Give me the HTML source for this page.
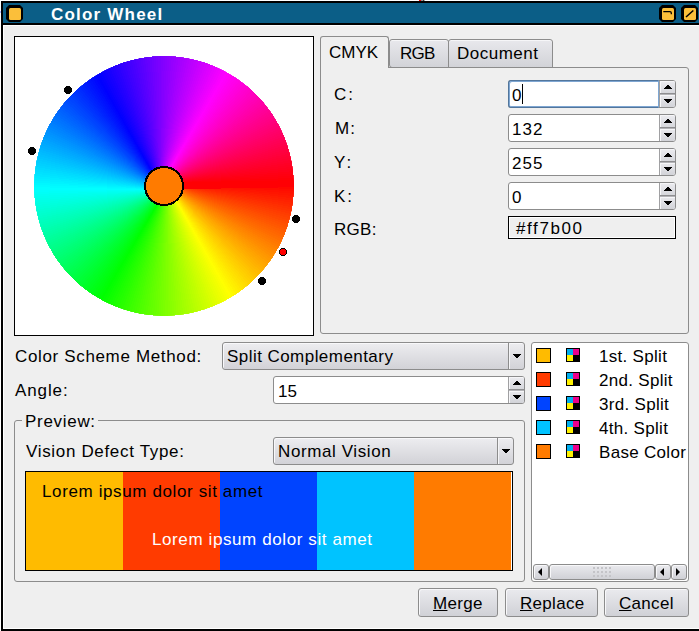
<!DOCTYPE html>
<html><head><meta charset="utf-8">
<style>
*{box-sizing:border-box}
html,body{margin:0;padding:0;width:699px;height:631px;overflow:hidden;background:#fff;position:relative}
.a{position:absolute}
.t{position:absolute;font-family:"Liberation Sans",sans-serif;font-size:17px;line-height:20px;white-space:nowrap;color:#000}
.b{font-weight:bold}
.btn{position:absolute;border:1px solid #8c8c8c;border-radius:3px;background:linear-gradient(#eaeaee,#d0d1d6);box-shadow:inset 1px 1px 0 #f8f8fa}
.field{position:absolute;background:#fff;border:1px solid #8c8c8c;border-radius:3px}
</style></head><body>
<!-- window -->
<div class="a" style="left:1px;top:1px;width:760px;height:630px;background:#efefef;border:2px solid #000;border-right:none"></div>
<div class="a" style="left:3px;top:3px;width:760px;height:20px;background:#0b5e87"></div>
<div class="a" style="left:3px;top:23px;width:760px;height:2px;background:#000"></div>
<div class="a" style="left:3px;top:25px;width:760px;height:1px;background:#fff"></div>
<div class="a" style="left:3px;top:25px;width:1px;height:604px;background:#fff"></div>
<div class="a" style="left:3px;top:628px;width:760px;height:1px;background:#fff"></div>

<!-- title icons -->
<svg class="a" style="left:6px;top:5px" width="17" height="17" viewBox="0 0 17 17">
<path d="M3 0H14L17 3V14L14 17H3L0 14V3Z" fill="#000"/>
<rect x="3" y="3" width="12" height="12" rx="1.5" fill="#fbbf3a"/>
</svg>
<svg class="a" style="left:659px;top:5px" width="17" height="17" viewBox="0 0 17 17">
<path d="M3 0H14L17 3V14L14 17H3L0 14V3Z" fill="#000"/>
<rect x="3" y="3" width="12" height="12" rx="1.5" fill="#fbbf3a"/>
<path d="M4.3 6.6H11Q12.3 6.6 12.3 8V9.2" stroke="#000" stroke-width="1.3" fill="none"/>
</svg>
<svg class="a" style="left:681px;top:5px" width="17" height="17" viewBox="0 0 17 17">
<path d="M3 0H14L17 3V14L14 17H3L0 14V3Z" fill="#000"/>
<rect x="3" y="3" width="12" height="12" rx="1.5" fill="#fbbf3a"/>
<path d="M5 12L12.3 5.5" stroke="#000" stroke-width="1.5" fill="none"/>
</svg>
<div class="t b" style="left:51px;top:5px;color:#fff;letter-spacing:1.2px">Color Wheel</div>

<!-- color wheel frame -->
<div class="a" style="left:14px;top:36px;width:300px;height:300px;background:#fff;border:1px solid #000"></div>
<svg class="a" style="left:14px;top:36px" width="300" height="300" viewBox="0 0 300 300">
<defs><clipPath id="cc"><circle cx="150" cy="150" r="130"/></clipPath></defs>
<g stroke-width="7" clip-path="url(#cc)" shape-rendering="crispEdges">
<line x1="150" y1="150" x2="280.00" y2="150.00" stroke="#ff0000"/>
<line x1="150" y1="150" x2="279.98" y2="152.27" stroke="#ff0400"/>
<line x1="150" y1="150" x2="279.92" y2="154.54" stroke="#ff0800"/>
<line x1="150" y1="150" x2="279.82" y2="156.80" stroke="#ff0d00"/>
<line x1="150" y1="150" x2="279.68" y2="159.07" stroke="#ff1100"/>
<line x1="150" y1="150" x2="279.51" y2="161.33" stroke="#ff1500"/>
<line x1="150" y1="150" x2="279.29" y2="163.59" stroke="#ff1900"/>
<line x1="150" y1="150" x2="279.03" y2="165.84" stroke="#ff1e00"/>
<line x1="150" y1="150" x2="278.73" y2="168.09" stroke="#ff2200"/>
<line x1="150" y1="150" x2="278.40" y2="170.34" stroke="#ff2600"/>
<line x1="150" y1="150" x2="278.03" y2="172.57" stroke="#ff2a00"/>
<line x1="150" y1="150" x2="277.61" y2="174.81" stroke="#ff2f00"/>
<line x1="150" y1="150" x2="277.16" y2="177.03" stroke="#ff3300"/>
<line x1="150" y1="150" x2="276.67" y2="179.24" stroke="#ff3700"/>
<line x1="150" y1="150" x2="276.14" y2="181.45" stroke="#ff3c00"/>
<line x1="150" y1="150" x2="275.57" y2="183.65" stroke="#ff4000"/>
<line x1="150" y1="150" x2="274.96" y2="185.83" stroke="#ff4400"/>
<line x1="150" y1="150" x2="274.32" y2="188.01" stroke="#ff4800"/>
<line x1="150" y1="150" x2="273.64" y2="190.17" stroke="#ff4d00"/>
<line x1="150" y1="150" x2="272.92" y2="192.32" stroke="#ff5100"/>
<line x1="150" y1="150" x2="272.16" y2="194.46" stroke="#ff5500"/>
<line x1="150" y1="150" x2="271.37" y2="196.59" stroke="#ff5900"/>
<line x1="150" y1="150" x2="270.53" y2="198.70" stroke="#ff5e00"/>
<line x1="150" y1="150" x2="269.67" y2="200.80" stroke="#ff6200"/>
<line x1="150" y1="150" x2="268.76" y2="202.88" stroke="#ff6600"/>
<line x1="150" y1="150" x2="267.82" y2="204.94" stroke="#ff6a00"/>
<line x1="150" y1="150" x2="266.84" y2="206.99" stroke="#ff6e00"/>
<line x1="150" y1="150" x2="265.83" y2="209.02" stroke="#ff7300"/>
<line x1="150" y1="150" x2="264.78" y2="211.03" stroke="#ff7700"/>
<line x1="150" y1="150" x2="263.70" y2="213.03" stroke="#ff7b00"/>
<line x1="150" y1="150" x2="262.58" y2="215.00" stroke="#ff8000"/>
<line x1="150" y1="150" x2="261.43" y2="216.95" stroke="#ff8400"/>
<line x1="150" y1="150" x2="260.25" y2="218.89" stroke="#ff8800"/>
<line x1="150" y1="150" x2="259.03" y2="220.80" stroke="#ff8c00"/>
<line x1="150" y1="150" x2="257.77" y2="222.70" stroke="#ff9000"/>
<line x1="150" y1="150" x2="256.49" y2="224.56" stroke="#ff9500"/>
<line x1="150" y1="150" x2="255.17" y2="226.41" stroke="#ff9900"/>
<line x1="150" y1="150" x2="253.82" y2="228.24" stroke="#ff9d00"/>
<line x1="150" y1="150" x2="252.44" y2="230.04" stroke="#ffa200"/>
<line x1="150" y1="150" x2="251.03" y2="231.81" stroke="#ffa600"/>
<line x1="150" y1="150" x2="249.59" y2="233.56" stroke="#ffaa00"/>
<line x1="150" y1="150" x2="248.11" y2="235.29" stroke="#ffae00"/>
<line x1="150" y1="150" x2="246.61" y2="236.99" stroke="#ffb200"/>
<line x1="150" y1="150" x2="245.08" y2="238.66" stroke="#ffb700"/>
<line x1="150" y1="150" x2="243.51" y2="240.31" stroke="#ffbb00"/>
<line x1="150" y1="150" x2="241.92" y2="241.92" stroke="#ffbf00"/>
<line x1="150" y1="150" x2="240.31" y2="243.51" stroke="#ffc300"/>
<line x1="150" y1="150" x2="238.66" y2="245.08" stroke="#ffc800"/>
<line x1="150" y1="150" x2="236.99" y2="246.61" stroke="#ffcc00"/>
<line x1="150" y1="150" x2="235.29" y2="248.11" stroke="#ffd000"/>
<line x1="150" y1="150" x2="233.56" y2="249.59" stroke="#ffd400"/>
<line x1="150" y1="150" x2="231.81" y2="251.03" stroke="#ffd900"/>
<line x1="150" y1="150" x2="230.04" y2="252.44" stroke="#ffdd00"/>
<line x1="150" y1="150" x2="228.24" y2="253.82" stroke="#ffe100"/>
<line x1="150" y1="150" x2="226.41" y2="255.17" stroke="#ffe500"/>
<line x1="150" y1="150" x2="224.56" y2="256.49" stroke="#ffea00"/>
<line x1="150" y1="150" x2="222.70" y2="257.77" stroke="#ffee00"/>
<line x1="150" y1="150" x2="220.80" y2="259.03" stroke="#fff200"/>
<line x1="150" y1="150" x2="218.89" y2="260.25" stroke="#fff700"/>
<line x1="150" y1="150" x2="216.95" y2="261.43" stroke="#fffb00"/>
<line x1="150" y1="150" x2="215.00" y2="262.58" stroke="#ffff00"/>
<line x1="150" y1="150" x2="213.03" y2="263.70" stroke="#fbff00"/>
<line x1="150" y1="150" x2="211.03" y2="264.78" stroke="#f7ff00"/>
<line x1="150" y1="150" x2="209.02" y2="265.83" stroke="#f2ff00"/>
<line x1="150" y1="150" x2="206.99" y2="266.84" stroke="#eeff00"/>
<line x1="150" y1="150" x2="204.94" y2="267.82" stroke="#eaff00"/>
<line x1="150" y1="150" x2="202.88" y2="268.76" stroke="#e6ff00"/>
<line x1="150" y1="150" x2="200.80" y2="269.67" stroke="#e1ff00"/>
<line x1="150" y1="150" x2="198.70" y2="270.53" stroke="#ddff00"/>
<line x1="150" y1="150" x2="196.59" y2="271.37" stroke="#d9ff00"/>
<line x1="150" y1="150" x2="194.46" y2="272.16" stroke="#d4ff00"/>
<line x1="150" y1="150" x2="192.32" y2="272.92" stroke="#d0ff00"/>
<line x1="150" y1="150" x2="190.17" y2="273.64" stroke="#ccff00"/>
<line x1="150" y1="150" x2="188.01" y2="274.32" stroke="#c8ff00"/>
<line x1="150" y1="150" x2="185.83" y2="274.96" stroke="#c3ff00"/>
<line x1="150" y1="150" x2="183.65" y2="275.57" stroke="#bfff00"/>
<line x1="150" y1="150" x2="181.45" y2="276.14" stroke="#bbff00"/>
<line x1="150" y1="150" x2="179.24" y2="276.67" stroke="#b7ff00"/>
<line x1="150" y1="150" x2="177.03" y2="277.16" stroke="#b2ff00"/>
<line x1="150" y1="150" x2="174.81" y2="277.61" stroke="#aeff00"/>
<line x1="150" y1="150" x2="172.57" y2="278.03" stroke="#aaff00"/>
<line x1="150" y1="150" x2="170.34" y2="278.40" stroke="#a6ff00"/>
<line x1="150" y1="150" x2="168.09" y2="278.73" stroke="#a2ff00"/>
<line x1="150" y1="150" x2="165.84" y2="279.03" stroke="#9dff00"/>
<line x1="150" y1="150" x2="163.59" y2="279.29" stroke="#99ff00"/>
<line x1="150" y1="150" x2="161.33" y2="279.51" stroke="#95ff00"/>
<line x1="150" y1="150" x2="159.07" y2="279.68" stroke="#90ff00"/>
<line x1="150" y1="150" x2="156.80" y2="279.82" stroke="#8cff00"/>
<line x1="150" y1="150" x2="154.54" y2="279.92" stroke="#88ff00"/>
<line x1="150" y1="150" x2="152.27" y2="279.98" stroke="#84ff00"/>
<line x1="150" y1="150" x2="150.00" y2="280.00" stroke="#80ff00"/>
<line x1="150" y1="150" x2="147.73" y2="279.98" stroke="#7bff00"/>
<line x1="150" y1="150" x2="145.46" y2="279.92" stroke="#77ff00"/>
<line x1="150" y1="150" x2="143.20" y2="279.82" stroke="#73ff00"/>
<line x1="150" y1="150" x2="140.93" y2="279.68" stroke="#6eff00"/>
<line x1="150" y1="150" x2="138.67" y2="279.51" stroke="#6aff00"/>
<line x1="150" y1="150" x2="136.41" y2="279.29" stroke="#66ff00"/>
<line x1="150" y1="150" x2="134.16" y2="279.03" stroke="#62ff00"/>
<line x1="150" y1="150" x2="131.91" y2="278.73" stroke="#5eff00"/>
<line x1="150" y1="150" x2="129.66" y2="278.40" stroke="#59ff00"/>
<line x1="150" y1="150" x2="127.43" y2="278.03" stroke="#55ff00"/>
<line x1="150" y1="150" x2="125.19" y2="277.61" stroke="#51ff00"/>
<line x1="150" y1="150" x2="122.97" y2="277.16" stroke="#4dff00"/>
<line x1="150" y1="150" x2="120.76" y2="276.67" stroke="#48ff00"/>
<line x1="150" y1="150" x2="118.55" y2="276.14" stroke="#44ff00"/>
<line x1="150" y1="150" x2="116.35" y2="275.57" stroke="#40ff00"/>
<line x1="150" y1="150" x2="114.17" y2="274.96" stroke="#3cff00"/>
<line x1="150" y1="150" x2="111.99" y2="274.32" stroke="#37ff00"/>
<line x1="150" y1="150" x2="109.83" y2="273.64" stroke="#33ff00"/>
<line x1="150" y1="150" x2="107.68" y2="272.92" stroke="#2fff00"/>
<line x1="150" y1="150" x2="105.54" y2="272.16" stroke="#2aff00"/>
<line x1="150" y1="150" x2="103.41" y2="271.37" stroke="#26ff00"/>
<line x1="150" y1="150" x2="101.30" y2="270.53" stroke="#22ff00"/>
<line x1="150" y1="150" x2="99.20" y2="269.67" stroke="#1eff00"/>
<line x1="150" y1="150" x2="97.12" y2="268.76" stroke="#1aff00"/>
<line x1="150" y1="150" x2="95.06" y2="267.82" stroke="#15ff00"/>
<line x1="150" y1="150" x2="93.01" y2="266.84" stroke="#11ff00"/>
<line x1="150" y1="150" x2="90.98" y2="265.83" stroke="#0dff00"/>
<line x1="150" y1="150" x2="88.97" y2="264.78" stroke="#08ff00"/>
<line x1="150" y1="150" x2="86.97" y2="263.70" stroke="#04ff00"/>
<line x1="150" y1="150" x2="85.00" y2="262.58" stroke="#00ff00"/>
<line x1="150" y1="150" x2="83.05" y2="261.43" stroke="#00ff04"/>
<line x1="150" y1="150" x2="81.11" y2="260.25" stroke="#00ff08"/>
<line x1="150" y1="150" x2="79.20" y2="259.03" stroke="#00ff0d"/>
<line x1="150" y1="150" x2="77.30" y2="257.77" stroke="#00ff11"/>
<line x1="150" y1="150" x2="75.44" y2="256.49" stroke="#00ff15"/>
<line x1="150" y1="150" x2="73.59" y2="255.17" stroke="#00ff19"/>
<line x1="150" y1="150" x2="71.76" y2="253.82" stroke="#00ff1e"/>
<line x1="150" y1="150" x2="69.96" y2="252.44" stroke="#00ff22"/>
<line x1="150" y1="150" x2="68.19" y2="251.03" stroke="#00ff26"/>
<line x1="150" y1="150" x2="66.44" y2="249.59" stroke="#00ff2a"/>
<line x1="150" y1="150" x2="64.71" y2="248.11" stroke="#00ff2f"/>
<line x1="150" y1="150" x2="63.01" y2="246.61" stroke="#00ff33"/>
<line x1="150" y1="150" x2="61.34" y2="245.08" stroke="#00ff37"/>
<line x1="150" y1="150" x2="59.69" y2="243.51" stroke="#00ff3c"/>
<line x1="150" y1="150" x2="58.08" y2="241.92" stroke="#00ff40"/>
<line x1="150" y1="150" x2="56.49" y2="240.31" stroke="#00ff44"/>
<line x1="150" y1="150" x2="54.92" y2="238.66" stroke="#00ff48"/>
<line x1="150" y1="150" x2="53.39" y2="236.99" stroke="#00ff4d"/>
<line x1="150" y1="150" x2="51.89" y2="235.29" stroke="#00ff51"/>
<line x1="150" y1="150" x2="50.41" y2="233.56" stroke="#00ff55"/>
<line x1="150" y1="150" x2="48.97" y2="231.81" stroke="#00ff59"/>
<line x1="150" y1="150" x2="47.56" y2="230.04" stroke="#00ff5e"/>
<line x1="150" y1="150" x2="46.18" y2="228.24" stroke="#00ff62"/>
<line x1="150" y1="150" x2="44.83" y2="226.41" stroke="#00ff66"/>
<line x1="150" y1="150" x2="43.51" y2="224.56" stroke="#00ff6a"/>
<line x1="150" y1="150" x2="42.23" y2="222.70" stroke="#00ff6f"/>
<line x1="150" y1="150" x2="40.97" y2="220.80" stroke="#00ff73"/>
<line x1="150" y1="150" x2="39.75" y2="218.89" stroke="#00ff77"/>
<line x1="150" y1="150" x2="38.57" y2="216.95" stroke="#00ff7b"/>
<line x1="150" y1="150" x2="37.42" y2="215.00" stroke="#00ff80"/>
<line x1="150" y1="150" x2="36.30" y2="213.03" stroke="#00ff84"/>
<line x1="150" y1="150" x2="35.22" y2="211.03" stroke="#00ff88"/>
<line x1="150" y1="150" x2="34.17" y2="209.02" stroke="#00ff8c"/>
<line x1="150" y1="150" x2="33.16" y2="206.99" stroke="#00ff90"/>
<line x1="150" y1="150" x2="32.18" y2="204.94" stroke="#00ff95"/>
<line x1="150" y1="150" x2="31.24" y2="202.88" stroke="#00ff99"/>
<line x1="150" y1="150" x2="30.33" y2="200.80" stroke="#00ff9d"/>
<line x1="150" y1="150" x2="29.47" y2="198.70" stroke="#00ffa2"/>
<line x1="150" y1="150" x2="28.63" y2="196.59" stroke="#00ffa6"/>
<line x1="150" y1="150" x2="27.84" y2="194.46" stroke="#00ffaa"/>
<line x1="150" y1="150" x2="27.08" y2="192.32" stroke="#00ffae"/>
<line x1="150" y1="150" x2="26.36" y2="190.17" stroke="#00ffb3"/>
<line x1="150" y1="150" x2="25.68" y2="188.01" stroke="#00ffb7"/>
<line x1="150" y1="150" x2="25.04" y2="185.83" stroke="#00ffbb"/>
<line x1="150" y1="150" x2="24.43" y2="183.65" stroke="#00ffbf"/>
<line x1="150" y1="150" x2="23.86" y2="181.45" stroke="#00ffc3"/>
<line x1="150" y1="150" x2="23.33" y2="179.24" stroke="#00ffc8"/>
<line x1="150" y1="150" x2="22.84" y2="177.03" stroke="#00ffcc"/>
<line x1="150" y1="150" x2="22.39" y2="174.81" stroke="#00ffd0"/>
<line x1="150" y1="150" x2="21.97" y2="172.57" stroke="#00ffd4"/>
<line x1="150" y1="150" x2="21.60" y2="170.34" stroke="#00ffd9"/>
<line x1="150" y1="150" x2="21.27" y2="168.09" stroke="#00ffdd"/>
<line x1="150" y1="150" x2="20.97" y2="165.84" stroke="#00ffe1"/>
<line x1="150" y1="150" x2="20.71" y2="163.59" stroke="#00ffe5"/>
<line x1="150" y1="150" x2="20.49" y2="161.33" stroke="#00ffea"/>
<line x1="150" y1="150" x2="20.32" y2="159.07" stroke="#00ffee"/>
<line x1="150" y1="150" x2="20.18" y2="156.80" stroke="#00fff2"/>
<line x1="150" y1="150" x2="20.08" y2="154.54" stroke="#00fff7"/>
<line x1="150" y1="150" x2="20.02" y2="152.27" stroke="#00fffb"/>
<line x1="150" y1="150" x2="20.00" y2="150.00" stroke="#00ffff"/>
<line x1="150" y1="150" x2="20.02" y2="147.73" stroke="#00fbff"/>
<line x1="150" y1="150" x2="20.08" y2="145.46" stroke="#00f7ff"/>
<line x1="150" y1="150" x2="20.18" y2="143.20" stroke="#00f2ff"/>
<line x1="150" y1="150" x2="20.32" y2="140.93" stroke="#00eeff"/>
<line x1="150" y1="150" x2="20.49" y2="138.67" stroke="#00eaff"/>
<line x1="150" y1="150" x2="20.71" y2="136.41" stroke="#00e5ff"/>
<line x1="150" y1="150" x2="20.97" y2="134.16" stroke="#00e1ff"/>
<line x1="150" y1="150" x2="21.27" y2="131.91" stroke="#00ddff"/>
<line x1="150" y1="150" x2="21.60" y2="129.66" stroke="#00d9ff"/>
<line x1="150" y1="150" x2="21.97" y2="127.43" stroke="#00d4ff"/>
<line x1="150" y1="150" x2="22.39" y2="125.19" stroke="#00d0ff"/>
<line x1="150" y1="150" x2="22.84" y2="122.97" stroke="#00ccff"/>
<line x1="150" y1="150" x2="23.33" y2="120.76" stroke="#00c8ff"/>
<line x1="150" y1="150" x2="23.86" y2="118.55" stroke="#00c3ff"/>
<line x1="150" y1="150" x2="24.43" y2="116.35" stroke="#00bfff"/>
<line x1="150" y1="150" x2="25.04" y2="114.17" stroke="#00bbff"/>
<line x1="150" y1="150" x2="25.68" y2="111.99" stroke="#00b7ff"/>
<line x1="150" y1="150" x2="26.36" y2="109.83" stroke="#00b2ff"/>
<line x1="150" y1="150" x2="27.08" y2="107.68" stroke="#00aeff"/>
<line x1="150" y1="150" x2="27.84" y2="105.54" stroke="#00aaff"/>
<line x1="150" y1="150" x2="28.63" y2="103.41" stroke="#00a6ff"/>
<line x1="150" y1="150" x2="29.47" y2="101.30" stroke="#00a2ff"/>
<line x1="150" y1="150" x2="30.33" y2="99.20" stroke="#009dff"/>
<line x1="150" y1="150" x2="31.24" y2="97.12" stroke="#0099ff"/>
<line x1="150" y1="150" x2="32.18" y2="95.06" stroke="#0095ff"/>
<line x1="150" y1="150" x2="33.16" y2="93.01" stroke="#0091ff"/>
<line x1="150" y1="150" x2="34.17" y2="90.98" stroke="#008cff"/>
<line x1="150" y1="150" x2="35.22" y2="88.97" stroke="#0088ff"/>
<line x1="150" y1="150" x2="36.30" y2="86.97" stroke="#0084ff"/>
<line x1="150" y1="150" x2="37.42" y2="85.00" stroke="#0080ff"/>
<line x1="150" y1="150" x2="38.57" y2="83.05" stroke="#007bff"/>
<line x1="150" y1="150" x2="39.75" y2="81.11" stroke="#0077ff"/>
<line x1="150" y1="150" x2="40.97" y2="79.20" stroke="#0073ff"/>
<line x1="150" y1="150" x2="42.23" y2="77.30" stroke="#006fff"/>
<line x1="150" y1="150" x2="43.51" y2="75.44" stroke="#006aff"/>
<line x1="150" y1="150" x2="44.83" y2="73.59" stroke="#0066ff"/>
<line x1="150" y1="150" x2="46.18" y2="71.76" stroke="#0062ff"/>
<line x1="150" y1="150" x2="47.56" y2="69.96" stroke="#005eff"/>
<line x1="150" y1="150" x2="48.97" y2="68.19" stroke="#0059ff"/>
<line x1="150" y1="150" x2="50.41" y2="66.44" stroke="#0055ff"/>
<line x1="150" y1="150" x2="51.89" y2="64.71" stroke="#0051ff"/>
<line x1="150" y1="150" x2="53.39" y2="63.01" stroke="#004cff"/>
<line x1="150" y1="150" x2="54.92" y2="61.34" stroke="#0048ff"/>
<line x1="150" y1="150" x2="56.49" y2="59.69" stroke="#0044ff"/>
<line x1="150" y1="150" x2="58.08" y2="58.08" stroke="#0040ff"/>
<line x1="150" y1="150" x2="59.69" y2="56.49" stroke="#003cff"/>
<line x1="150" y1="150" x2="61.34" y2="54.92" stroke="#0037ff"/>
<line x1="150" y1="150" x2="63.01" y2="53.39" stroke="#0033ff"/>
<line x1="150" y1="150" x2="64.71" y2="51.89" stroke="#002fff"/>
<line x1="150" y1="150" x2="66.44" y2="50.41" stroke="#002bff"/>
<line x1="150" y1="150" x2="68.19" y2="48.97" stroke="#0026ff"/>
<line x1="150" y1="150" x2="69.96" y2="47.56" stroke="#0022ff"/>
<line x1="150" y1="150" x2="71.76" y2="46.18" stroke="#001eff"/>
<line x1="150" y1="150" x2="73.59" y2="44.83" stroke="#0019ff"/>
<line x1="150" y1="150" x2="75.44" y2="43.51" stroke="#0015ff"/>
<line x1="150" y1="150" x2="77.30" y2="42.23" stroke="#0011ff"/>
<line x1="150" y1="150" x2="79.20" y2="40.97" stroke="#000dff"/>
<line x1="150" y1="150" x2="81.11" y2="39.75" stroke="#0008ff"/>
<line x1="150" y1="150" x2="83.05" y2="38.57" stroke="#0004ff"/>
<line x1="150" y1="150" x2="85.00" y2="37.42" stroke="#0000ff"/>
<line x1="150" y1="150" x2="86.97" y2="36.30" stroke="#0400ff"/>
<line x1="150" y1="150" x2="88.97" y2="35.22" stroke="#0800ff"/>
<line x1="150" y1="150" x2="90.98" y2="34.17" stroke="#0d00ff"/>
<line x1="150" y1="150" x2="93.01" y2="33.16" stroke="#1100ff"/>
<line x1="150" y1="150" x2="95.06" y2="32.18" stroke="#1500ff"/>
<line x1="150" y1="150" x2="97.12" y2="31.24" stroke="#1900ff"/>
<line x1="150" y1="150" x2="99.20" y2="30.33" stroke="#1e00ff"/>
<line x1="150" y1="150" x2="101.30" y2="29.47" stroke="#2200ff"/>
<line x1="150" y1="150" x2="103.41" y2="28.63" stroke="#2600ff"/>
<line x1="150" y1="150" x2="105.54" y2="27.84" stroke="#2a00ff"/>
<line x1="150" y1="150" x2="107.68" y2="27.08" stroke="#2f00ff"/>
<line x1="150" y1="150" x2="109.83" y2="26.36" stroke="#3300ff"/>
<line x1="150" y1="150" x2="111.99" y2="25.68" stroke="#3700ff"/>
<line x1="150" y1="150" x2="114.17" y2="25.04" stroke="#3c00ff"/>
<line x1="150" y1="150" x2="116.35" y2="24.43" stroke="#4000ff"/>
<line x1="150" y1="150" x2="118.55" y2="23.86" stroke="#4400ff"/>
<line x1="150" y1="150" x2="120.76" y2="23.33" stroke="#4800ff"/>
<line x1="150" y1="150" x2="122.97" y2="22.84" stroke="#4c00ff"/>
<line x1="150" y1="150" x2="125.19" y2="22.39" stroke="#5100ff"/>
<line x1="150" y1="150" x2="127.43" y2="21.97" stroke="#5500ff"/>
<line x1="150" y1="150" x2="129.66" y2="21.60" stroke="#5900ff"/>
<line x1="150" y1="150" x2="131.91" y2="21.27" stroke="#5d00ff"/>
<line x1="150" y1="150" x2="134.16" y2="20.97" stroke="#6200ff"/>
<line x1="150" y1="150" x2="136.41" y2="20.71" stroke="#6600ff"/>
<line x1="150" y1="150" x2="138.67" y2="20.49" stroke="#6a00ff"/>
<line x1="150" y1="150" x2="140.93" y2="20.32" stroke="#6f00ff"/>
<line x1="150" y1="150" x2="143.20" y2="20.18" stroke="#7300ff"/>
<line x1="150" y1="150" x2="145.46" y2="20.08" stroke="#7700ff"/>
<line x1="150" y1="150" x2="147.73" y2="20.02" stroke="#7b00ff"/>
<line x1="150" y1="150" x2="150.00" y2="20.00" stroke="#8000ff"/>
<line x1="150" y1="150" x2="152.27" y2="20.02" stroke="#8400ff"/>
<line x1="150" y1="150" x2="154.54" y2="20.08" stroke="#8800ff"/>
<line x1="150" y1="150" x2="156.80" y2="20.18" stroke="#8c00ff"/>
<line x1="150" y1="150" x2="159.07" y2="20.32" stroke="#9000ff"/>
<line x1="150" y1="150" x2="161.33" y2="20.49" stroke="#9500ff"/>
<line x1="150" y1="150" x2="163.59" y2="20.71" stroke="#9900ff"/>
<line x1="150" y1="150" x2="165.84" y2="20.97" stroke="#9d00ff"/>
<line x1="150" y1="150" x2="168.09" y2="21.27" stroke="#a200ff"/>
<line x1="150" y1="150" x2="170.34" y2="21.60" stroke="#a600ff"/>
<line x1="150" y1="150" x2="172.57" y2="21.97" stroke="#aa00ff"/>
<line x1="150" y1="150" x2="174.81" y2="22.39" stroke="#ae00ff"/>
<line x1="150" y1="150" x2="177.03" y2="22.84" stroke="#b300ff"/>
<line x1="150" y1="150" x2="179.24" y2="23.33" stroke="#b700ff"/>
<line x1="150" y1="150" x2="181.45" y2="23.86" stroke="#bb00ff"/>
<line x1="150" y1="150" x2="183.65" y2="24.43" stroke="#bf00ff"/>
<line x1="150" y1="150" x2="185.83" y2="25.04" stroke="#c300ff"/>
<line x1="150" y1="150" x2="188.01" y2="25.68" stroke="#c800ff"/>
<line x1="150" y1="150" x2="190.17" y2="26.36" stroke="#cc00ff"/>
<line x1="150" y1="150" x2="192.32" y2="27.08" stroke="#d000ff"/>
<line x1="150" y1="150" x2="194.46" y2="27.84" stroke="#d500ff"/>
<line x1="150" y1="150" x2="196.59" y2="28.63" stroke="#d900ff"/>
<line x1="150" y1="150" x2="198.70" y2="29.47" stroke="#dd00ff"/>
<line x1="150" y1="150" x2="200.80" y2="30.33" stroke="#e100ff"/>
<line x1="150" y1="150" x2="202.88" y2="31.24" stroke="#e600ff"/>
<line x1="150" y1="150" x2="204.94" y2="32.18" stroke="#ea00ff"/>
<line x1="150" y1="150" x2="206.99" y2="33.16" stroke="#ee00ff"/>
<line x1="150" y1="150" x2="209.02" y2="34.17" stroke="#f200ff"/>
<line x1="150" y1="150" x2="211.03" y2="35.22" stroke="#f700ff"/>
<line x1="150" y1="150" x2="213.03" y2="36.30" stroke="#fb00ff"/>
<line x1="150" y1="150" x2="215.00" y2="37.42" stroke="#ff00ff"/>
<line x1="150" y1="150" x2="216.95" y2="38.57" stroke="#ff00fb"/>
<line x1="150" y1="150" x2="218.89" y2="39.75" stroke="#ff00f7"/>
<line x1="150" y1="150" x2="220.80" y2="40.97" stroke="#ff00f2"/>
<line x1="150" y1="150" x2="222.70" y2="42.23" stroke="#ff00ee"/>
<line x1="150" y1="150" x2="224.56" y2="43.51" stroke="#ff00ea"/>
<line x1="150" y1="150" x2="226.41" y2="44.83" stroke="#ff00e6"/>
<line x1="150" y1="150" x2="228.24" y2="46.18" stroke="#ff00e1"/>
<line x1="150" y1="150" x2="230.04" y2="47.56" stroke="#ff00dd"/>
<line x1="150" y1="150" x2="231.81" y2="48.97" stroke="#ff00d9"/>
<line x1="150" y1="150" x2="233.56" y2="50.41" stroke="#ff00d4"/>
<line x1="150" y1="150" x2="235.29" y2="51.89" stroke="#ff00d0"/>
<line x1="150" y1="150" x2="236.99" y2="53.39" stroke="#ff00cc"/>
<line x1="150" y1="150" x2="238.66" y2="54.92" stroke="#ff00c8"/>
<line x1="150" y1="150" x2="240.31" y2="56.49" stroke="#ff00c3"/>
<line x1="150" y1="150" x2="241.92" y2="58.08" stroke="#ff00bf"/>
<line x1="150" y1="150" x2="243.51" y2="59.69" stroke="#ff00bb"/>
<line x1="150" y1="150" x2="245.08" y2="61.34" stroke="#ff00b7"/>
<line x1="150" y1="150" x2="246.61" y2="63.01" stroke="#ff00b3"/>
<line x1="150" y1="150" x2="248.11" y2="64.71" stroke="#ff00ae"/>
<line x1="150" y1="150" x2="249.59" y2="66.44" stroke="#ff00aa"/>
<line x1="150" y1="150" x2="251.03" y2="68.19" stroke="#ff00a6"/>
<line x1="150" y1="150" x2="252.44" y2="69.96" stroke="#ff00a1"/>
<line x1="150" y1="150" x2="253.82" y2="71.76" stroke="#ff009d"/>
<line x1="150" y1="150" x2="255.17" y2="73.59" stroke="#ff0099"/>
<line x1="150" y1="150" x2="256.49" y2="75.44" stroke="#ff0095"/>
<line x1="150" y1="150" x2="257.77" y2="77.30" stroke="#ff0090"/>
<line x1="150" y1="150" x2="259.03" y2="79.20" stroke="#ff008c"/>
<line x1="150" y1="150" x2="260.25" y2="81.11" stroke="#ff0088"/>
<line x1="150" y1="150" x2="261.43" y2="83.05" stroke="#ff0084"/>
<line x1="150" y1="150" x2="262.58" y2="85.00" stroke="#ff0080"/>
<line x1="150" y1="150" x2="263.70" y2="86.97" stroke="#ff007b"/>
<line x1="150" y1="150" x2="264.78" y2="88.97" stroke="#ff0077"/>
<line x1="150" y1="150" x2="265.83" y2="90.98" stroke="#ff0073"/>
<line x1="150" y1="150" x2="266.84" y2="93.01" stroke="#ff006f"/>
<line x1="150" y1="150" x2="267.82" y2="95.06" stroke="#ff006a"/>
<line x1="150" y1="150" x2="268.76" y2="97.12" stroke="#ff0066"/>
<line x1="150" y1="150" x2="269.67" y2="99.20" stroke="#ff0062"/>
<line x1="150" y1="150" x2="270.53" y2="101.30" stroke="#ff005e"/>
<line x1="150" y1="150" x2="271.37" y2="103.41" stroke="#ff0059"/>
<line x1="150" y1="150" x2="272.16" y2="105.54" stroke="#ff0055"/>
<line x1="150" y1="150" x2="272.92" y2="107.68" stroke="#ff0051"/>
<line x1="150" y1="150" x2="273.64" y2="109.83" stroke="#ff004d"/>
<line x1="150" y1="150" x2="274.32" y2="111.99" stroke="#ff0048"/>
<line x1="150" y1="150" x2="274.96" y2="114.17" stroke="#ff0044"/>
<line x1="150" y1="150" x2="275.57" y2="116.35" stroke="#ff0040"/>
<line x1="150" y1="150" x2="276.14" y2="118.55" stroke="#ff003c"/>
<line x1="150" y1="150" x2="276.67" y2="120.76" stroke="#ff0037"/>
<line x1="150" y1="150" x2="277.16" y2="122.97" stroke="#ff0033"/>
<line x1="150" y1="150" x2="277.61" y2="125.19" stroke="#ff002f"/>
<line x1="150" y1="150" x2="278.03" y2="127.43" stroke="#ff002b"/>
<line x1="150" y1="150" x2="278.40" y2="129.66" stroke="#ff0026"/>
<line x1="150" y1="150" x2="278.73" y2="131.91" stroke="#ff0022"/>
<line x1="150" y1="150" x2="279.03" y2="134.16" stroke="#ff001e"/>
<line x1="150" y1="150" x2="279.29" y2="136.41" stroke="#ff001a"/>
<line x1="150" y1="150" x2="279.51" y2="138.67" stroke="#ff0015"/>
<line x1="150" y1="150" x2="279.68" y2="140.93" stroke="#ff0011"/>
<line x1="150" y1="150" x2="279.82" y2="143.20" stroke="#ff000d"/>
<line x1="150" y1="150" x2="279.92" y2="145.46" stroke="#ff0008"/>
<line x1="150" y1="150" x2="279.98" y2="147.73" stroke="#ff0004"/>
</g>
<g shape-rendering="crispEdges"><circle cx="150" cy="150" r="19" fill="#ff7b00" stroke="#000" stroke-width="2"/>
<circle cx="54" cy="54" r="4" fill="#000"/>
<circle cx="18" cy="115" r="4" fill="#000"/>
<circle cx="282" cy="183" r="4" fill="#000"/>
<circle cx="248" cy="245" r="4" fill="#000"/>
<circle cx="269" cy="216" r="3.5" fill="#f00" stroke="#000" stroke-width="1"/></g>
</svg>

<!-- tabs -->
<div class="a" style="left:320px;top:67px;width:369px;height:267px;border:1px solid #8c8c8c;border-radius:0 3px 3px 3px;background:#efefef"></div>
<div class="a" style="left:389px;top:39px;width:60px;height:29px;border:1px solid #8c8c8c;border-radius:3px 3px 0 3px;background:linear-gradient(#e8e8ec,#d2d3d8);box-shadow:inset 0 1px 0 #f6f6f8"></div>
<div class="a" style="left:448px;top:39px;width:105px;height:29px;border:1px solid #8c8c8c;border-radius:3px 3px 0 0;background:linear-gradient(#e8e8ec,#d2d3d8);box-shadow:inset 0 1px 0 #f6f6f8"></div>
<div class="a" style="left:320px;top:36px;width:69px;height:32px;border:1px solid #8c8c8c;border-bottom:none;border-radius:3px 3px 0 0;background:#efefef"></div>
<div class="t " style="left:329px;top:43px;">CMYK</div>
<div class="t " style="left:400px;top:44px;letter-spacing:-0.8px">RGB</div>
<div class="t " style="left:457px;top:44px;letter-spacing:0.5px">Document</div>

<div class="t " style="left:334px;top:85px;letter-spacing:2px">C:</div>
<div class="t " style="left:335px;top:119px;letter-spacing:1px">M:</div>
<div class="t " style="left:334px;top:153px;letter-spacing:2px">Y:</div>
<div class="t " style="left:334px;top:187px;letter-spacing:2px">K:</div>
<div class="t " style="left:334px;top:220px;letter-spacing:0.3px">RGB:</div>
<div class="a" style="left:508px;top:80px;width:168px;height:28px;background:#fff;border:1px solid #8c8c8c;border-radius:3px"></div><div class="a" style="left:660px;top:81px;width:15px;height:12px;background:linear-gradient(#ececf0,#d6d7dc);border-radius:0 2px 0 0;box-shadow:inset 1px 1px 0 #f6f6f8"></div><div class="a" style="left:660px;top:95px;width:15px;height:12px;background:linear-gradient(#e9e9ed,#d2d3d8);border-radius:0 0 2px 0;box-shadow:inset 1px 1px 0 #f6f6f8"></div><div class="a" style="left:659px;top:81px;width:1px;height:26px;background:#a0a0a2"></div><div class="a" style="left:660px;top:93px;width:15px;height:1px;background:#8e8e90"></div><div class="a" style="left:660px;top:94px;width:15px;height:1px;background:#b4b4b8"></div><div class="a" style="left:508px;top:80px;width:151px;height:28px;border:1px solid #52769c;border-right-color:#7ea6d2;border-radius:3px 0 0 3px;box-shadow:inset 1px 1px 0 #7ea6d2, inset 0 -1px 0 #7ea6d2"></div><div class="a" style="left:667px;top:85px;width:2px;height:1px;background:#000"></div><div class="a" style="left:666px;top:86px;width:4px;height:1px;background:#000"></div><div class="a" style="left:665px;top:87px;width:6px;height:1px;background:#000"></div><div class="a" style="left:664px;top:88px;width:8px;height:1px;background:#000"></div><div class="a" style="left:664px;top:99px;width:8px;height:1px;background:#000"></div><div class="a" style="left:665px;top:100px;width:6px;height:1px;background:#000"></div><div class="a" style="left:666px;top:101px;width:4px;height:1px;background:#000"></div><div class="a" style="left:667px;top:102px;width:2px;height:1px;background:#000"></div><div class="a" style="left:508px;top:114px;width:168px;height:28px;background:#fff;border:1px solid #8c8c8c;border-radius:3px"></div><div class="a" style="left:660px;top:115px;width:15px;height:12px;background:linear-gradient(#ececf0,#d6d7dc);border-radius:0 2px 0 0;box-shadow:inset 1px 1px 0 #f6f6f8"></div><div class="a" style="left:660px;top:129px;width:15px;height:12px;background:linear-gradient(#e9e9ed,#d2d3d8);border-radius:0 0 2px 0;box-shadow:inset 1px 1px 0 #f6f6f8"></div><div class="a" style="left:659px;top:115px;width:1px;height:26px;background:#a0a0a2"></div><div class="a" style="left:660px;top:127px;width:15px;height:1px;background:#8e8e90"></div><div class="a" style="left:660px;top:128px;width:15px;height:1px;background:#b4b4b8"></div><div class="a" style="left:667px;top:119px;width:2px;height:1px;background:#000"></div><div class="a" style="left:666px;top:120px;width:4px;height:1px;background:#000"></div><div class="a" style="left:665px;top:121px;width:6px;height:1px;background:#000"></div><div class="a" style="left:664px;top:122px;width:8px;height:1px;background:#000"></div><div class="a" style="left:664px;top:133px;width:8px;height:1px;background:#000"></div><div class="a" style="left:665px;top:134px;width:6px;height:1px;background:#000"></div><div class="a" style="left:666px;top:135px;width:4px;height:1px;background:#000"></div><div class="a" style="left:667px;top:136px;width:2px;height:1px;background:#000"></div><div class="a" style="left:508px;top:148px;width:168px;height:28px;background:#fff;border:1px solid #8c8c8c;border-radius:3px"></div><div class="a" style="left:660px;top:149px;width:15px;height:12px;background:linear-gradient(#ececf0,#d6d7dc);border-radius:0 2px 0 0;box-shadow:inset 1px 1px 0 #f6f6f8"></div><div class="a" style="left:660px;top:163px;width:15px;height:12px;background:linear-gradient(#e9e9ed,#d2d3d8);border-radius:0 0 2px 0;box-shadow:inset 1px 1px 0 #f6f6f8"></div><div class="a" style="left:659px;top:149px;width:1px;height:26px;background:#a0a0a2"></div><div class="a" style="left:660px;top:161px;width:15px;height:1px;background:#8e8e90"></div><div class="a" style="left:660px;top:162px;width:15px;height:1px;background:#b4b4b8"></div><div class="a" style="left:667px;top:153px;width:2px;height:1px;background:#000"></div><div class="a" style="left:666px;top:154px;width:4px;height:1px;background:#000"></div><div class="a" style="left:665px;top:155px;width:6px;height:1px;background:#000"></div><div class="a" style="left:664px;top:156px;width:8px;height:1px;background:#000"></div><div class="a" style="left:664px;top:167px;width:8px;height:1px;background:#000"></div><div class="a" style="left:665px;top:168px;width:6px;height:1px;background:#000"></div><div class="a" style="left:666px;top:169px;width:4px;height:1px;background:#000"></div><div class="a" style="left:667px;top:170px;width:2px;height:1px;background:#000"></div><div class="a" style="left:508px;top:182px;width:168px;height:28px;background:#fff;border:1px solid #8c8c8c;border-radius:3px"></div><div class="a" style="left:660px;top:183px;width:15px;height:12px;background:linear-gradient(#ececf0,#d6d7dc);border-radius:0 2px 0 0;box-shadow:inset 1px 1px 0 #f6f6f8"></div><div class="a" style="left:660px;top:197px;width:15px;height:12px;background:linear-gradient(#e9e9ed,#d2d3d8);border-radius:0 0 2px 0;box-shadow:inset 1px 1px 0 #f6f6f8"></div><div class="a" style="left:659px;top:183px;width:1px;height:26px;background:#a0a0a2"></div><div class="a" style="left:660px;top:195px;width:15px;height:1px;background:#8e8e90"></div><div class="a" style="left:660px;top:196px;width:15px;height:1px;background:#b4b4b8"></div><div class="a" style="left:667px;top:187px;width:2px;height:1px;background:#000"></div><div class="a" style="left:666px;top:188px;width:4px;height:1px;background:#000"></div><div class="a" style="left:665px;top:189px;width:6px;height:1px;background:#000"></div><div class="a" style="left:664px;top:190px;width:8px;height:1px;background:#000"></div><div class="a" style="left:664px;top:201px;width:8px;height:1px;background:#000"></div><div class="a" style="left:665px;top:202px;width:6px;height:1px;background:#000"></div><div class="a" style="left:666px;top:203px;width:4px;height:1px;background:#000"></div><div class="a" style="left:667px;top:204px;width:2px;height:1px;background:#000"></div><div class="t " style="left:512px;top:86px;">0</div><div class="a" style="left:522px;top:84px;width:1px;height:20px;background:#000"></div><div class="t " style="left:512px;top:120px;letter-spacing:1px">132</div><div class="t " style="left:512px;top:154px;letter-spacing:1px">255</div><div class="t " style="left:512px;top:188px;">0</div><div class="a" style="left:508px;top:216px;width:168px;height:23px;border:1px solid #000;box-shadow:inset 1px 1px 0 #fff, inset -1px -1px 0 #fff;background:#efefef"></div><div class="t " style="left:516px;top:219px;letter-spacing:1.6px">#ff7b00</div><div class="t " style="left:15px;top:347px;letter-spacing:0.65px">Color Scheme Method:</div><div class="a" style="left:222px;top:342px;width:303px;height:28px;border:1px solid #8c8c8c;border-radius:3px;background:linear-gradient(#ededf0,#d2d2d7);box-shadow:inset 1px 1px 0 #f8f8fa"></div><div class="a" style="left:508px;top:343px;width:1px;height:26px;background:#8c8c8c"></div><div class="a" style="left:509px;top:343px;width:1px;height:26px;background:#f4f4f6"></div><div class="a" style="left:513px;top:354px;width:8px;height:1px;background:#000"></div><div class="a" style="left:514px;top:355px;width:6px;height:1px;background:#000"></div><div class="a" style="left:515px;top:356px;width:4px;height:1px;background:#000"></div><div class="a" style="left:516px;top:357px;width:2px;height:1px;background:#000"></div><div class="t " style="left:227px;top:347px;letter-spacing:0.45px">Split Complementary</div><div class="t " style="left:15px;top:381px;letter-spacing:0.9px">Angle:</div><div class="a" style="left:273px;top:376px;width:252px;height:28px;background:#fff;border:1px solid #8c8c8c;border-radius:3px"></div><div class="a" style="left:509px;top:377px;width:15px;height:12px;background:linear-gradient(#ececf0,#d6d7dc);border-radius:0 2px 0 0;box-shadow:inset 1px 1px 0 #f6f6f8"></div><div class="a" style="left:509px;top:391px;width:15px;height:12px;background:linear-gradient(#e9e9ed,#d2d3d8);border-radius:0 0 2px 0;box-shadow:inset 1px 1px 0 #f6f6f8"></div><div class="a" style="left:508px;top:377px;width:1px;height:26px;background:#a0a0a2"></div><div class="a" style="left:509px;top:389px;width:15px;height:1px;background:#8e8e90"></div><div class="a" style="left:509px;top:390px;width:15px;height:1px;background:#b4b4b8"></div><div class="a" style="left:516px;top:381px;width:2px;height:1px;background:#000"></div><div class="a" style="left:515px;top:382px;width:4px;height:1px;background:#000"></div><div class="a" style="left:514px;top:383px;width:6px;height:1px;background:#000"></div><div class="a" style="left:513px;top:384px;width:8px;height:1px;background:#000"></div><div class="a" style="left:513px;top:395px;width:8px;height:1px;background:#000"></div><div class="a" style="left:514px;top:396px;width:6px;height:1px;background:#000"></div><div class="a" style="left:515px;top:397px;width:4px;height:1px;background:#000"></div><div class="a" style="left:516px;top:398px;width:2px;height:1px;background:#000"></div><div class="t " style="left:278px;top:382px;letter-spacing:0px">15</div><div class="a" style="left:14px;top:420px;width:511px;height:162px;border:1px solid #8c8c8c;border-radius:3px"></div><div class="a" style="left:22px;top:410px;width:76px;height:20px;background:#efefef"></div><div class="t " style="left:25px;top:412px;letter-spacing:0.7px">Preview:</div><div class="t " style="left:26px;top:442px;letter-spacing:0.67px">Vision Defect Type:</div><div class="a" style="left:273px;top:437px;width:241px;height:28px;border:1px solid #8c8c8c;border-radius:3px;background:linear-gradient(#ededf0,#d2d2d7);box-shadow:inset 1px 1px 0 #f8f8fa"></div><div class="a" style="left:497px;top:438px;width:1px;height:26px;background:#8c8c8c"></div><div class="a" style="left:498px;top:438px;width:1px;height:26px;background:#f4f4f6"></div><div class="a" style="left:502px;top:449px;width:8px;height:1px;background:#000"></div><div class="a" style="left:503px;top:450px;width:6px;height:1px;background:#000"></div><div class="a" style="left:504px;top:451px;width:4px;height:1px;background:#000"></div><div class="a" style="left:505px;top:452px;width:2px;height:1px;background:#000"></div><div class="t " style="left:278px;top:442px;letter-spacing:0.6px">Normal Vision</div><div class="a" style="left:25px;top:471px;width:488px;height:100px;border:1px solid #000;background:#fff"></div><div class="a" style="left:26px;top:472px;width:97px;height:98px;background:#ffbb00"></div><div class="a" style="left:123px;top:472px;width:97px;height:98px;background:#ff3b00"></div><div class="a" style="left:220px;top:472px;width:97px;height:98px;background:#0044ff"></div><div class="a" style="left:317px;top:472px;width:97px;height:98px;background:#00c3ff"></div><div class="a" style="left:414px;top:472px;width:97px;height:98px;background:#ff7b00"></div><div class="t " style="left:42px;top:482px;letter-spacing:0.62px">Lorem ipsum dolor sit amet</div><div class="t " style="left:152px;top:530px;letter-spacing:0.6px;color:#fff">Lorem ipsum dolor sit amet</div><div class="a" style="left:531px;top:342px;width:158px;height:240px;border:1px solid #8c8c8c;border-radius:3px;background:#fff"></div><div class="a" style="left:536px;top:348px;width:15px;height:15px;border:1px solid #000;background:#ffbb00"></div><svg class="a" style="left:566px;top:348px" width="14" height="14"><rect x="0" y="0" width="14" height="14" fill="#000"/><rect x="1" y="1" width="6" height="6" fill="#00aeef"/><rect x="7" y="1" width="6" height="6" fill="#ec008c"/><rect x="1" y="7" width="6" height="6" fill="#fff200"/></svg><div class="t " style="left:599px;top:347px;letter-spacing:0.3px">1st. Split</div><div class="a" style="left:536px;top:372px;width:15px;height:15px;border:1px solid #000;background:#ff3b00"></div><svg class="a" style="left:566px;top:372px" width="14" height="14"><rect x="0" y="0" width="14" height="14" fill="#000"/><rect x="1" y="1" width="6" height="6" fill="#00aeef"/><rect x="7" y="1" width="6" height="6" fill="#ec008c"/><rect x="1" y="7" width="6" height="6" fill="#fff200"/></svg><div class="t " style="left:599px;top:371px;letter-spacing:0.3px">2nd. Split</div><div class="a" style="left:536px;top:396px;width:15px;height:15px;border:1px solid #000;background:#0044ff"></div><svg class="a" style="left:566px;top:396px" width="14" height="14"><rect x="0" y="0" width="14" height="14" fill="#000"/><rect x="1" y="1" width="6" height="6" fill="#00aeef"/><rect x="7" y="1" width="6" height="6" fill="#ec008c"/><rect x="1" y="7" width="6" height="6" fill="#fff200"/></svg><div class="t " style="left:599px;top:395px;letter-spacing:0.3px">3rd. Split</div><div class="a" style="left:536px;top:420px;width:15px;height:15px;border:1px solid #000;background:#00c3ff"></div><svg class="a" style="left:566px;top:420px" width="14" height="14"><rect x="0" y="0" width="14" height="14" fill="#000"/><rect x="1" y="1" width="6" height="6" fill="#00aeef"/><rect x="7" y="1" width="6" height="6" fill="#ec008c"/><rect x="1" y="7" width="6" height="6" fill="#fff200"/></svg><div class="t " style="left:599px;top:419px;letter-spacing:0.3px">4th. Split</div><div class="a" style="left:536px;top:444px;width:15px;height:15px;border:1px solid #000;background:#ff7b00"></div><svg class="a" style="left:566px;top:444px" width="14" height="14"><rect x="0" y="0" width="14" height="14" fill="#000"/><rect x="1" y="1" width="6" height="6" fill="#00aeef"/><rect x="7" y="1" width="6" height="6" fill="#ec008c"/><rect x="1" y="7" width="6" height="6" fill="#fff200"/></svg><div class="t " style="left:599px;top:443px;letter-spacing:0.3px">Base Color</div><div class="btn" style="left:533px;top:564px;width:16px;height:16px"></div><div class="btn" style="left:549px;top:564px;width:106px;height:16px"></div><div class="btn" style="left:655px;top:564px;width:16px;height:16px"></div><div class="btn" style="left:671px;top:564px;width:16px;height:16px"></div><svg class="a" style="left:537px;top:568px" width="6" height="8"><path d="M5 0V8L1 4Z" fill="#000"/></svg><svg class="a" style="left:659px;top:568px" width="6" height="8"><path d="M5 0V8L1 4Z" fill="#000"/></svg><svg class="a" style="left:675px;top:568px" width="6" height="8"><path d="M1 0V8L5 4Z" fill="#000"/></svg><svg class="a" style="left:593px;top:567px" width="20" height="12"><rect x="0" y="0" width="2" height="2" fill="#c4c4c8"/><rect x="0" y="4" width="2" height="2" fill="#c4c4c8"/><rect x="0" y="8" width="2" height="2" fill="#c4c4c8"/><rect x="4" y="0" width="2" height="2" fill="#c4c4c8"/><rect x="4" y="4" width="2" height="2" fill="#c4c4c8"/><rect x="4" y="8" width="2" height="2" fill="#c4c4c8"/><rect x="8" y="0" width="2" height="2" fill="#c4c4c8"/><rect x="8" y="4" width="2" height="2" fill="#c4c4c8"/><rect x="8" y="8" width="2" height="2" fill="#c4c4c8"/><rect x="12" y="0" width="2" height="2" fill="#c4c4c8"/><rect x="12" y="4" width="2" height="2" fill="#c4c4c8"/><rect x="12" y="8" width="2" height="2" fill="#c4c4c8"/><rect x="16" y="0" width="2" height="2" fill="#c4c4c8"/><rect x="16" y="4" width="2" height="2" fill="#c4c4c8"/><rect x="16" y="8" width="2" height="2" fill="#c4c4c8"/></svg><div class="btn" style="left:418px;top:588px;width:80px;height:29px"></div><div class="t " style="left:433px;top:594px;letter-spacing:0.3px"><u>M</u>erge</div><div class="btn" style="left:505px;top:588px;width:93px;height:29px"></div><div class="t " style="left:520px;top:594px;letter-spacing:0.3px"><u>R</u>eplace</div><div class="btn" style="left:604px;top:588px;width:85px;height:29px"></div><div class="t " style="left:619px;top:594px;letter-spacing:0.3px"><u>C</u>ancel</div><div class="a" style="left:419px;top:0;width:2px;height:1px;background:#f00"></div><div class="a" style="left:421px;top:0;width:1px;height:1px;background:#7c9898"></div><div class="a" style="left:422px;top:0;width:1px;height:1px;background:#9a9a9a"></div><div class="a" style="left:423px;top:0;width:1px;height:1px;background:#404040"></div><div class="a" style="left:424px;top:0;width:1px;height:1px;background:#b0b0b0"></div><div class="a" style="left:0;top:11px;width:1px;height:2px;background:#b8b8ff"></div></body></html>
